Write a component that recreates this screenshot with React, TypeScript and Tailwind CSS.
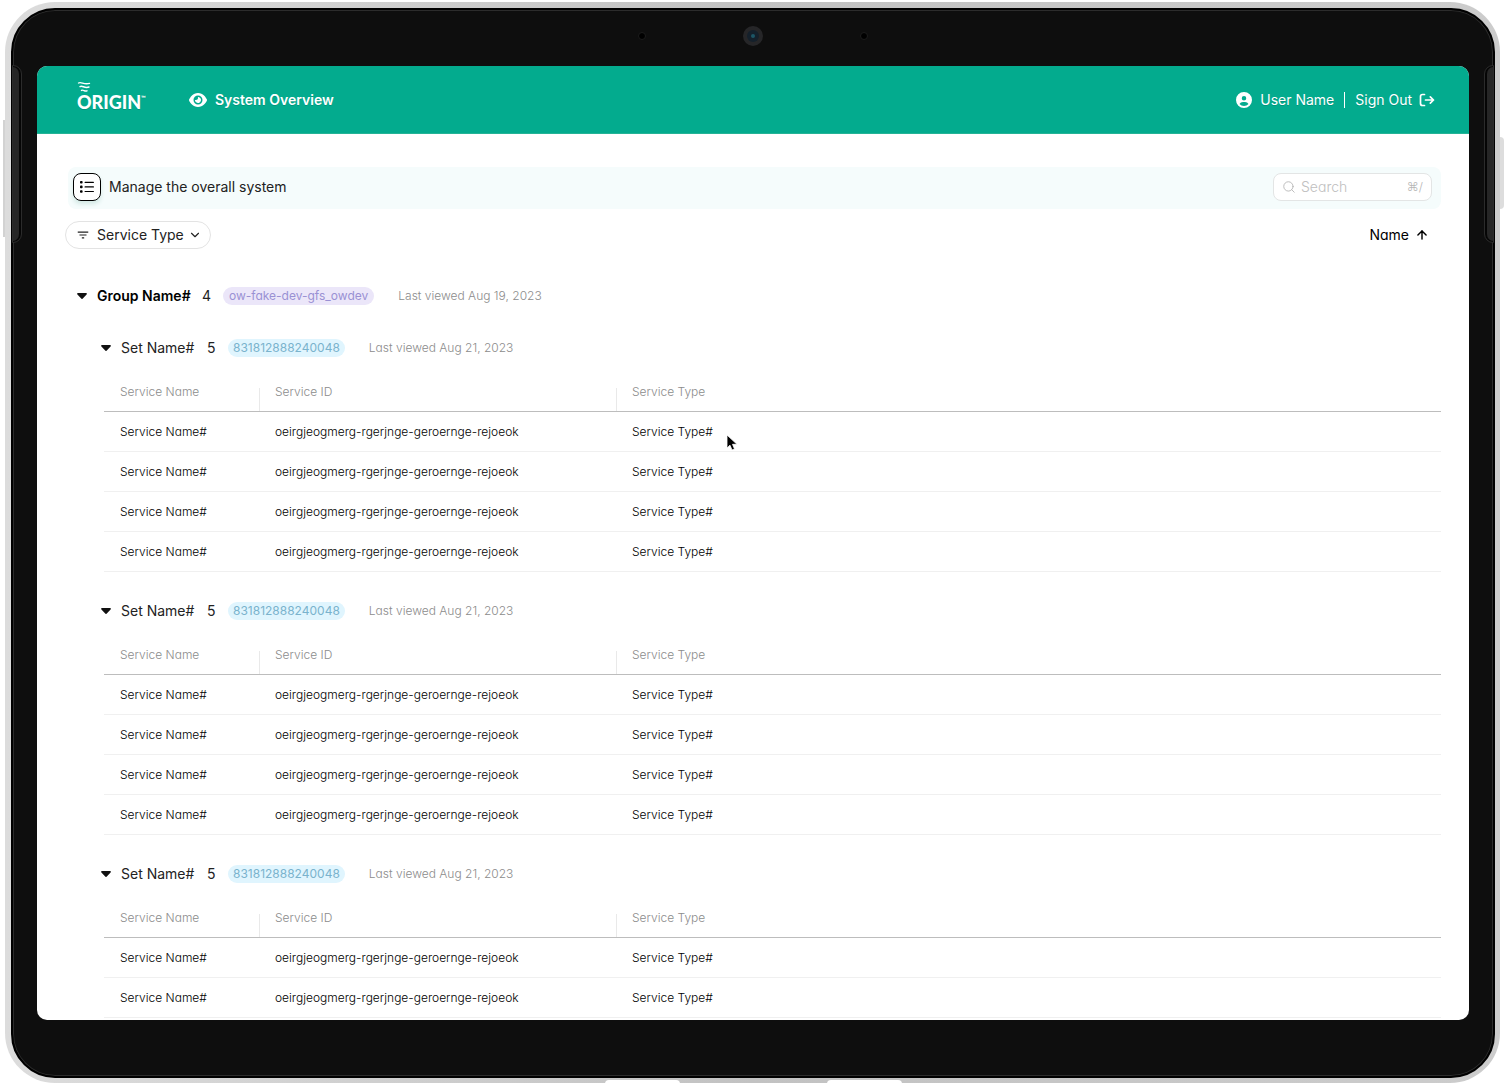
import React from "react";
import { ArrowUp, ChevronDown, Search } from "lucide-react";
import { FaCircleUser, FaEye } from "react-icons/fa6";
import { MdFilterList } from "react-icons/md";

const service = {
  name: "Service Name#",
  id: "oeirgjeogmerg-rgerjnge-geroernge-rejoeok",
  type: "Service Type#",
};

const sets = [
  { key: "set-1", services: [service, service, service, service] },
  { key: "set-2", services: [service, service, service, service] },
  { key: "set-3", services: [service, service] },
];

function Logo() {
  return (
    <a href="#" className="flex w-28 flex-col pb-2 text-white">
      <svg viewBox="0 0 14 13" className="h-[13px] w-3.5" fill="none" stroke="currentColor" strokeWidth="1.4" strokeLinecap="round">
        <path d="M1.500 2C4.500 .2 6.500 4.200 12.500 2.400" />
        <path d="M3 5.600C5.500 4 7.500 7.800 12 6" />
        <path d="M4.500 9.400C6.500 8.200 7.500 11 10 9.800" />
      </svg>
      <span className="flex items-start font-['Lato',sans-serif] text-lg leading-4 font-black">
        ORIGIN
        <span className="text-[6px] leading-2">™</span>
      </span>
    </a>
  );
}

function SignOutIcon() {
  return (
    <svg viewBox="0 0 16 14" className="h-3.5 w-4" fill="none" stroke="currentColor" strokeWidth="1.7" strokeLinecap="round" strokeLinejoin="round">
      <path d="M5.500 1.500H3.500Q1.500 1.500 1.500 3.500V10.500Q1.500 12.500 3.500 12.500H5.500" />
      <path d="M6.500 7H14.500M11.300 3.800L14.500 7L11.300 10.200" />
    </svg>
  );
}

function ListIcon() {
  return (
    <svg viewBox="0 0 14 12" className="h-3 w-3.5" fill="currentColor">
      <rect x="0" y="0" width="2.600" height="2.600" rx=".8" />
      <rect x="0" y="4.600" width="2.600" height="2.600" rx=".8" />
      <rect x="0" y="9.200" width="2.600" height="2.600" rx=".8" />
      <rect x="4.500" y=".7" width="9.500" height="1.200" rx=".6" />
      <rect x="4.500" y="5.300" width="9.500" height="1.200" rx=".6" />
      <rect x="4.500" y="9.900" width="9.500" height="1.200" rx=".6" />
    </svg>
  );
}

function Caret() {
  return (
    <svg viewBox="0 0 10 6" className="h-1.5 w-2.5 fill-[#111111]">
      <path d="M1 0h8c.9 0 1.200.9.6 1.500L5.800 5.600a1.100 1.100 0 0 1-1.600 0L.4 1.500C-.2.9.1 0 1 0z" />
    </svg>
  );
}

function HeadCell({ children }: { children: React.ReactNode }) {
  return (
    <th className="p-0 align-bottom font-light">
      <div className="h-[23px] border-l border-[#e9e9e9] pl-[15px] leading-2">{children}</div>
    </th>
  );
}

function ServiceSet({ services }: { services: (typeof service)[] }) {
  return (
    <section className="mb-[27px]">
      <div className="flex h-6 items-center">
        <button type="button" aria-label="Toggle set" className="mr-2.5 ml-9 flex h-6 w-2.5 items-center">
          <Caret />
        </button>
        <h3 className="w-[86px] text-sm">Set Name#</h3>
        <span className="w-[21px] text-sm">5</span>
        <span className="mr-6 rounded-full bg-[#e0f5fe] px-[5px] text-xs leading-[18px] text-[#7ab3cd]">831812888240048</span>
        <span className="text-xs font-light text-[#8c8c8c] [font-feature-settings:'cv11']">Last viewed Aug 21, 2023</span>
      </div>
      <div className="mt-4 pl-[39px]">
        <table className="w-full table-fixed border-separate border-spacing-0 text-left text-xs [font-feature-settings:'cv11']">
          <colgroup>
            <col className="w-[155px]" />
            <col className="w-[357px]" />
            <col />
          </colgroup>
          <thead className="text-[#8c8c8c] [&_th]:border-b [&_th]:border-[#bdbdbd]">
            <tr className="h-9">
              <th className="p-0 pl-4 align-bottom font-light">
                <div className="h-[23px] leading-2">Service Name</div>
              </th>
              <HeadCell>Service ID</HeadCell>
              <HeadCell>Service Type</HeadCell>
            </tr>
          </thead>
          <tbody className="font-light text-black [&_td]:border-b [&_td]:border-[#f0f0f0]">
            {services.map((item, index) => (
              <tr key={index} className="h-10">
                <td className="p-0 pl-4">{item.name}</td>
                <td className="p-0 pl-4">{item.id}</td>
                <td className="p-0 pl-4">{item.type}</td>
              </tr>
            ))}
          </tbody>
        </table>
      </div>
    </section>
  );
}

function Header() {
  return (
    <header className="flex h-[68px] shrink-0 items-center border-b border-[#25b396] bg-[#03ab8e] pr-[34px] pl-10 text-sm text-white text-shadow-2xs">
      <Logo />
      <a href="#" className="flex items-center gap-2 font-semibold">
        <FaEye className="size-[18px]" />
        System Overview
      </a>
      <nav className="ml-auto flex items-center">
        <a href="#" className="flex items-center gap-2">
          <FaCircleUser className="size-4" />
          User Name
        </a>
        <span className="mx-2.5 h-4 w-px bg-white" />
        <a href="#" className="flex items-center gap-[7px]">
          Sign Out
          <SignOutIcon />
        </a>
      </nav>
    </header>
  );
}

function Toolbar() {
  return (
    <>
      <div className="ml-[3px] flex h-[42px] items-center rounded-lg bg-[#f5fcfc] pr-[9px] pb-0.5 pl-[5px]">
        <button type="button" aria-label="List view" className="flex size-7 items-center justify-center rounded-lg border border-black bg-white text-black shadow-[0_3px_4px_#d3e9e5]">
          <ListIcon />
        </button>
        <h1 className="ml-2 text-sm">Manage the overall system</h1>
        <label className="ml-auto flex h-7 w-[159px] items-center rounded-lg border border-[#e3e5e5] bg-white px-2 [font-feature-settings:'cv11']">
          <Search size={14} strokeWidth={1.5} className="shrink-0 text-[#b5b5b5]" />
          <input type="text" aria-label="Search" placeholder="Search" className="ml-[5px] w-full min-w-0 bg-transparent text-sm font-light outline-none placeholder:text-[#c0c0c0]" />
          <kbd className="font-['Inter',sans-serif] text-xs font-light text-[#b5b5b5]">⌘/</kbd>
        </label>
      </div>
      <div className="mt-3 flex items-center justify-between pr-3 text-sm">
        <button type="button" className="flex h-7 items-center rounded-full border border-[#e3e3e3] pr-2 pl-2.5">
          <MdFilterList className="mr-[7px] size-3.5" />
          Service Type
          <ChevronDown size={14} strokeWidth={2} className="ml-1" />
        </button>
        <button type="button" className="flex items-center gap-1.5 text-black [font-feature-settings:'cv11']">
          Name
          <ArrowUp size={14} strokeWidth={2.5} />
        </button>
      </div>
    </>
  );
}

function Hardware() {
  return (
    <>
      {/* Camera row */}
      <div className="absolute inset-x-0 top-4 flex items-center justify-center gap-[97px]">
        <span className="size-2 rounded-full border border-[#1c1c1c] bg-black" />
        <span className="flex size-5 items-center justify-center rounded-full bg-[#262628]">
          <span className="flex size-3 items-center justify-center rounded-full bg-[#14202b]">
            <span className="size-1 rounded-full bg-[#1c5566]" />
          </span>
        </span>
        <span className="size-2 rounded-full border border-[#1c1c1c] bg-black" />
      </div>
      {/* Side grips */}
      <span className="absolute top-14 left-0 h-[176px] w-2 rounded-r-lg border-y border-r-2 border-[#050505] bg-[#262626] outline outline-[#2b2b2b]" />
      <span className="absolute top-14 right-0 h-[176px] w-2 rounded-l-lg border-y border-l-2 border-[#050505] bg-[#262626] outline outline-[#2b2b2b]" />
    </>
  );
}

export default function App() {
  return (
    <div className="relative h-screen overflow-hidden bg-white pt-0.5 pr-2 pb-[3px] pl-[5px] font-['Inter',sans-serif] text-[#222222]">
      <span className="absolute top-[120px] left-[3px] h-[117px] w-0.5 bg-[#d2d2d2]" />
      <span className="absolute top-[137px] right-1 h-[72px] w-1 rounded-r bg-[#dddddd]" />
      <div className="h-full rounded-[50px] bg-linear-to-r from-[#dcdcdc] via-[#c2c2c2] to-[#cccccc] pt-1.5 pr-[5px] pb-[5px] pl-1.5">
        <div className="relative h-full rounded-[44px] border-2 border-black bg-[#0e0e0e] px-6 py-14 shadow-[inset_0_0_0_1px_#2c2c2c]">
          <Hardware />
          <div className="flex h-full flex-col overflow-hidden rounded-[10px] bg-white">
            <Header />
            <main className="min-h-0 flex-1 px-7 pt-[33px]">
              <Toolbar />
              <div className="mt-[35px] mb-7 flex h-6 items-center pl-3">
                <button type="button" aria-label="Toggle group" className="mr-2.5 flex h-6 w-2.5 items-center">
                  <Caret />
                </button>
                <h2 className="w-[105px] text-sm font-semibold text-black">Group Name#</h2>
                <span className="w-[21px] text-sm">4</span>
                <span className="mr-6 rounded-full bg-[#ebe6f9] px-1.5 text-xs leading-[18px] text-[#9a91d4] [font-feature-settings:'cv11']">ow-fake-dev-gfs_owdev</span>
                <span className="text-xs font-light text-[#8c8c8c]">Last viewed Aug 19, 2023</span>
              </div>
              {sets.map((set) => (
                <ServiceSet key={set.key} services={set.services} />
              ))}
            </main>
          </div>
        </div>
      </div>
      {/* Connector cut-outs under the bottom edge */}
      <span className="absolute bottom-0 left-[605px] h-1.5 w-[75px] rounded-t bg-white" />
      <span className="absolute bottom-0 left-[827px] h-1.5 w-[75px] rounded-t bg-white" />
      {/* Pointer */}
      <svg viewBox="0 0 12 18" className="absolute top-[434px] left-[726px] h-[18px] w-3">
        <path d="M1 1v13l3-2.800 2 4.800 2.500-1-2-4.700H11z" fill="#000" stroke="#fff" strokeWidth=".8" />
      </svg>
    </div>
  );
}
